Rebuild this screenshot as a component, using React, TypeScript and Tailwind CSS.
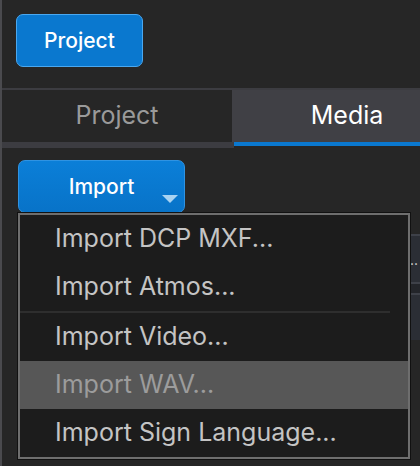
import React from "react";

const menuItems = [
  { label: "Import DCP MXF...", active: false },
  { label: "Import Atmos...", active: false },
  { label: "sep", active: false },
  { label: "Import Video...", active: false },
  { label: "Import WAV...", active: true },
  { label: "Import Sign Language...", active: false },
];

export default function App() {
  return (
    <div
      className="relative w-[420px] h-[466px] overflow-hidden bg-[#262626] flex"
      style={{ fontFamily: "Inter, 'Liberation Sans', sans-serif" }}
    >
      <div className="w-[2px] shrink-0 bg-[#4a4a4e]" />
      <div className="flex-1 min-w-0 flex flex-col">
        <div className="h-[88px] pl-[14px] pt-[14px]">
          <button className="w-[127px] h-[53px] rounded-[7px] bg-[#0a78cf] border border-[#4aa8f0] text-white text-[21px] font-medium">
            Project
          </button>
        </div>
        <div className="h-[2px] bg-[#3c3c41]" />
        <div className="h-[52px] flex">
          <div className="w-[230px] shrink-0 flex items-center justify-center text-[25px] text-[#9a9a9a]">
            Project
          </div>
          <div className="w-[230px] shrink-0 flex items-center justify-center bg-[#404045] text-[25px] text-white">
            Media
          </div>
        </div>
        <div className="h-[6px] flex">
          <div className="w-[232px] shrink-0 bg-[#3c3c41]" />
          <div className="flex-1">
            <div className="h-[4px] bg-[#0a78cf]" />
          </div>
        </div>
        <div className="pt-[12px] pl-[16px]">
          <button className="relative w-[167px] h-[53px] rounded-[7px] bg-gradient-to-b from-[#0b7fd8] to-[#0873c8] border border-[#2f93e2] text-white text-[21px] font-medium">
            Import
            <svg
              className="absolute right-[6px] bottom-[9px]"
              width="16"
              height="8"
              viewBox="0 0 16 8"
            >
              <path d="M0 0 H16 L8 8 Z" fill="#a9d3f2" />
            </svg>
          </button>
        </div>
        <div className="mt-[21px] ml-[16px] flex flex-col">
          <div className="h-[2px] bg-[#3e4149]" />
          <div className="h-[46px] bg-[#2b2e35] flex items-center justify-end pr-[2px] text-[14px] text-[#d8d8d8]">
            ...
          </div>
          <div className="h-[2px] bg-[#3e4149]" />
          <div className="h-[9px] bg-[#23252a]" />
          <div className="h-[2px] bg-[#3e4149]" />
          <div className="h-[45px] bg-[#2b2e35]" />
        </div>
      </div>

      <div className="absolute left-[18px] top-[213px] w-[392px] h-[246px] bg-[#1c1c1c] border-2 border-[#6e6e6e] shadow-[0_0_0_1px_#111]">
        {menuItems.map((item, i) =>
          item.label === "sep" ? (
            <div key={i} className="h-[2px] mr-[18px] bg-[#2e2e2e]" />
          ) : (
            <div
              key={i}
              className={
                item.active
                  ? "h-[48px] flex items-center pl-[35px] bg-[#575757] text-[25px] text-[#9c9c9c]"
                  : "h-[48px] flex items-center pl-[35px] text-[25px] text-[#c4c4c4]"
              }
            >
              {item.label}
            </div>
          )
        )}
      </div>
    </div>
  );
}
